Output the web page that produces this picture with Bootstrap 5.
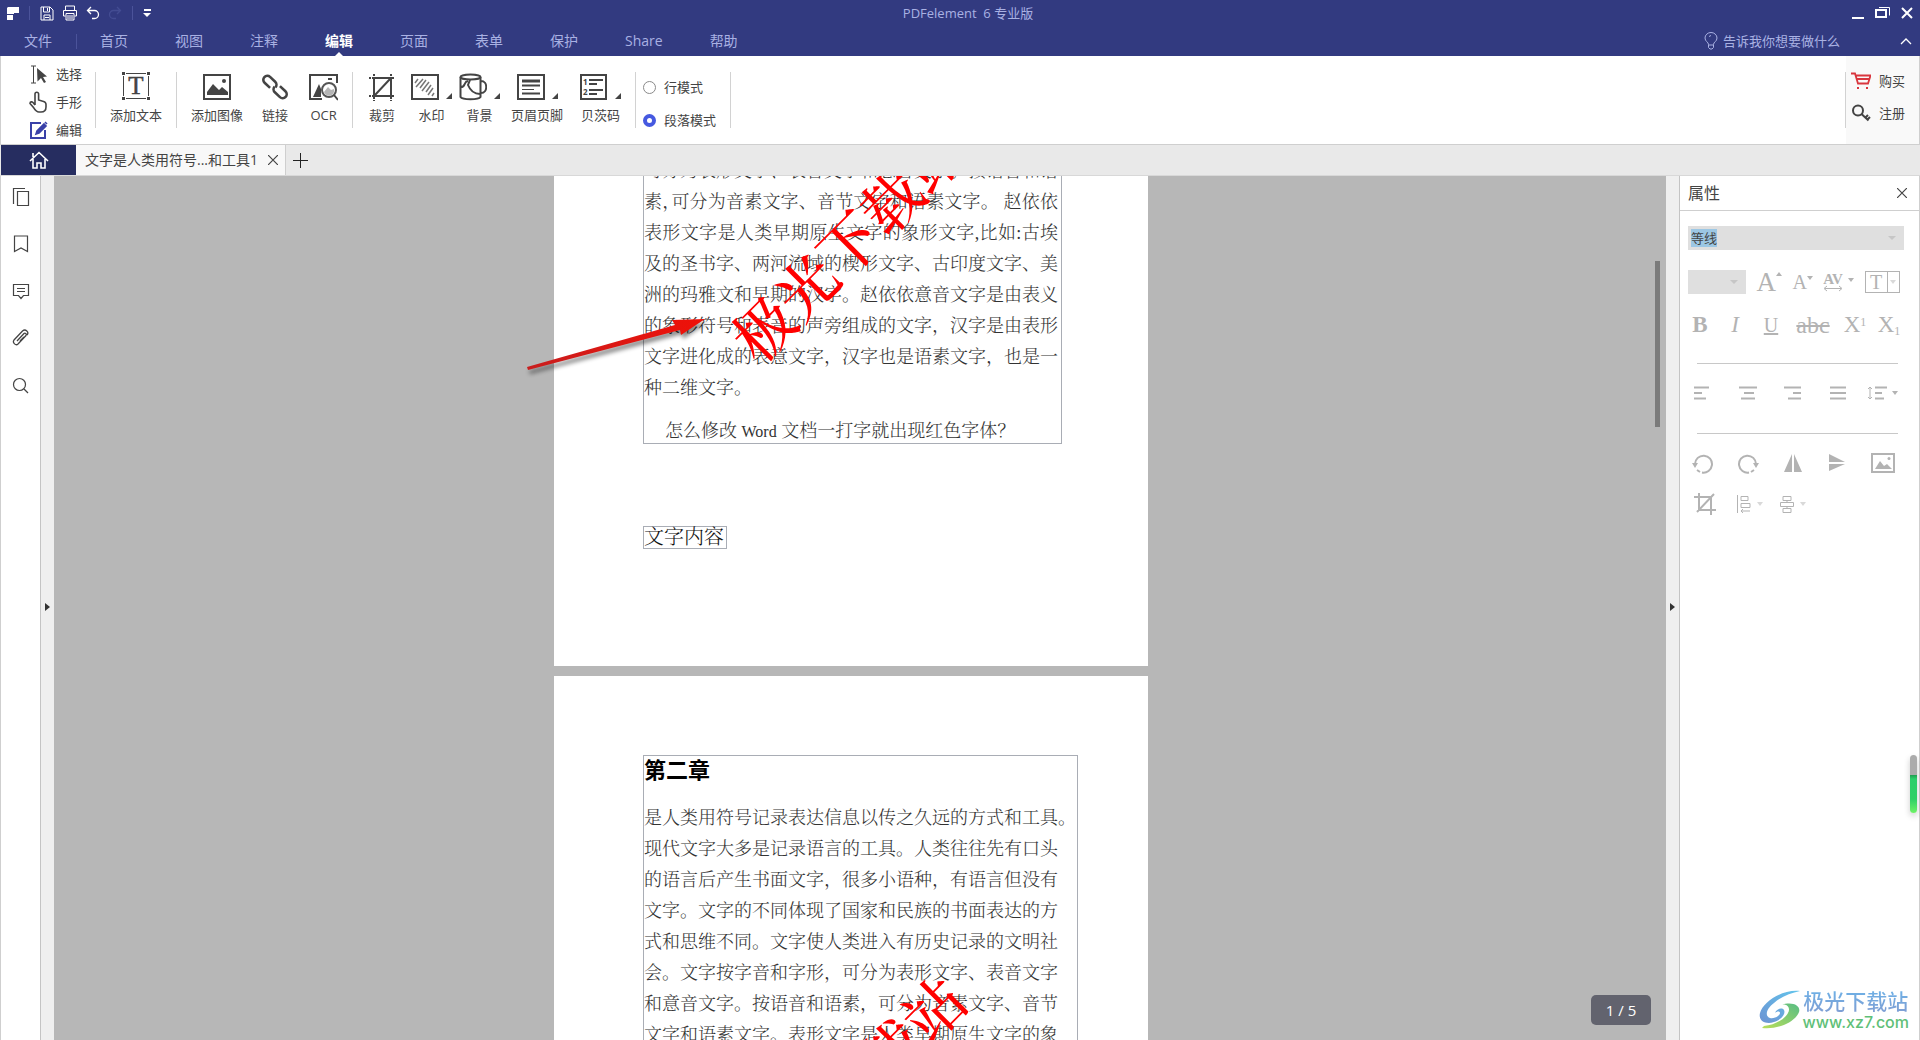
<!DOCTYPE html>
<html lang="zh-CN">
<head>
<meta charset="utf-8">
<meta name="viewport" content="width=device-width, initial-scale=1">
<title>PDFelement 6 专业版</title>
<link href="https://cdn.jsdelivr.net/npm/bootstrap@5.3.0/dist/css/bootstrap.min.css" rel="stylesheet">
<style>
:root{--navy:#323a80;--ink:#444;--dim:#b3b3b3;--line:#cfcfcf}
html,body{height:100%}
body{font-family:"Open Sans","Noto Sans CJK SC",sans-serif;font-size:13px;line-height:20px;color:var(--ink);background:#fff;overflow:hidden}
button{background:none;border:0;padding:0;color:inherit;line-height:inherit;display:inline-flex;align-items:center;justify-content:center}
a{color:inherit;text-decoration:none}
svg{display:block;flex:none}
.ln{fill:none;stroke:currentColor}

/* title bar and menu */
.top-area{background:var(--navy);color:#a9b1e3;flex:none}
.title-row{height:26px;padding-left:7px;padding-right:7px}
.title-side{flex:1 1 0}
.quick{color:#fff}
.vbar{width:1px;background:#4b539a}
.q-sep{height:14px;margin:0 10px}
.app-title{font-size:13px}
.win-tools{color:#fff;gap:10px}
.menu-row{height:30px;padding-left:24px;padding-right:8px;font-size:14px}
.menu-row ul{gap:47px}
.menu-row .file-item{margin-right:-23px}
.menu-row .m-sep{height:15px;margin-right:-24px}
.menu-row a{position:relative;display:block;line-height:30px}
.menu-row a.on{color:#fff;font-weight:bold}
.menu-row a.on::after{content:"";position:absolute;left:50%;bottom:0;margin-left:-4px;border:4px solid transparent;border-top:0;border-bottom-color:#fff}
.ask{font-size:13px;gap:5px}
.menu-end{gap:60px}

/* ribbon */
.ribbon{border-bottom:1px solid var(--line);border-left:1px solid var(--line);height:89px;flex:none}
.modes{padding:4px 13px 0 27px}
.modes button{height:28px;gap:8px;justify-content:start}
.modes svg{width:20px}
.sep{width:1px;background:#d2d2d2;margin-top:16px;margin-bottom:16px}
.group{padding:15px 14px 0 14px}
.tool{flex-direction:column;white-space:nowrap;justify-content:start}
.tool .pic{display:flex;align-items:end;height:30px;margin-bottom:4px;gap:7px}
.tool .pic.more::after{content:"";border:3px solid #444;border-top-color:transparent;border-left-color:transparent;margin-bottom:2px}
.g-s{margin-right:7px}.g-m{margin-right:11px}.g-l{margin-right:17px}.g-x{margin-right:19px}.g-y{margin-right:21px}
.para-modes{padding:21px 14px 0 7px;gap:13px}
.para-modes label{gap:8px}
.para-modes input{appearance:none;width:13px;height:13px;margin:0;border:1px solid #8a8a8a;border-radius:50%;background:#fff}
.para-modes input:checked{border:4px solid #4659e0}
.account{background:#f9f9f9;padding:15px 14px 0 5px;gap:12px;border-right:1px solid var(--line)}
.account button{gap:8px}

/* document tabs */
.tabs{height:31px;background:#e9e9e9;border-bottom:1px solid #d8d8d8;padding-left:1px;flex:none}
.home-tab{width:75px;background:#262d60;color:#fff}
.doc-tab{background:#f8f8f8;border-right:1px solid var(--line);padding:0 7px 0 9px;gap:10px;font-size:14px}
.add-tab{width:28px;color:#222}

/* body */
.rail{width:41px;border-left:1px solid var(--line);border-right:1px solid #c4c4c4;padding-top:11px;gap:27px}
.rail button{height:20px}
.gutter{width:13px;background:#efefef}
.gutter::before{content:"";margin:427px auto 0 4px;height:0;border:4px solid transparent;border-left:5px solid #333;border-right:0}
.canvas{background:#b7b7b7;position:relative;overflow:hidden}
.sheets{margin-top:-350px;margin-right:18px;display:flex;flex-direction:column;align-items:center;gap:10px}
.sheet{width:594px;height:840px;background:#fff;position:relative;overflow:hidden;padding:79px 71px 0 89px;flex:none;font-family:"Liberation Serif","Noto Serif CJK SC","Noto Sans CJK SC",serif;font-size:18px;line-height:31px;font-weight:300;color:#333}
.text-box{border:1px solid #a9adb5}
.text-box p{width:414px;margin:0}
.full{display:block;text-align:justify;text-align-last:justify;white-space:nowrap}
.half{font-feature-settings:"halt"}
.box-a{width:419px;padding-top:250px}
.box-a .indent{line-height:22px;padding:16px 0 0 21px;width:auto}
.latin{font-size:16px}
.box-b{width:84px;margin-top:82px;font-size:20px;line-height:21px;color:#111;white-space:nowrap}
.box-c{width:435px}
.box-c h2{font-family:"Noto Sans CJK SC",sans-serif;font-size:22px;line-height:24px;font-weight:bold;color:#000;margin:0 0 23px}
.stamp{position:absolute;left:50%;top:50%;transform:translate(-50%,-50%) rotate(-45deg);color:#f00;font-size:60px;line-height:60px;font-weight:500;white-space:nowrap}
.pointer{position:absolute;left:465px;top:130px}
.thumb{position:absolute;right:6px;top:85px;width:5px;height:166px;background:#7b7b7b}
.page-no{position:absolute;right:15px;bottom:15px;width:60px;height:30px;border-radius:5px;background:#62636e;color:#fff;font-size:15px}

/* properties */
.props{width:241px;border-left:1px solid #c4c4c4;border-right:1px solid var(--line);color:var(--dim);font-family:"Liberation Serif",serif}
.props header{height:35px;border-bottom:1px solid var(--line);padding:0 12px 0 8px;color:var(--ink);font-family:"Open Sans","Noto Sans CJK SC",sans-serif;font-size:16px}
.sel{appearance:none;border:0;border-radius:0;height:24px;background:#dfdfdf;color:#444;width:100%;padding:0 3px;font-family:"Noto Sans CJK SC",sans-serif}
.sel-wrap{position:relative}
.sel-wrap::after{content:"";position:absolute;right:8px;top:10px;border:4px solid transparent;border-top-color:#c6c6c6;border-bottom:0}
.sel-name{background:linear-gradient(#9cc7e4,#9cc7e4) 3px 3px/26px 18px no-repeat #dfdfdf}
.caret-d{border:3px solid transparent;border-top:4px solid currentColor;border-bottom:0}
.caret-u{border:3px solid transparent;border-bottom:4px solid currentColor;border-top:0}
.face{padding:15px 15px 0 8px}
.sizes{margin-top:20px}
.sizes .sel-wrap{width:58px}
.big-a{font-size:27px}
.small-a{font-size:20px}
.styles{display:grid;grid-template-columns:36px 34px 38px 46px 38px 30px;margin:19px -8px 0 -6px;font-size:23px;height:24px}
.styles .under{font-size:20px}
.styles .strike{font-size:24px}
.styles sup,.styles sub{font-size:12px}
.t-box{border:1px solid var(--dim);height:22px;width:35px;font-size:20px}
.t-box i{border-left:1px solid var(--dim);height:20px;width:12px;display:flex;align-items:center;justify-content:center}
.rule{height:1px;background:#c8c8c8;margin:0 21px 0 17px}
.gap-top{margin-top:26px}
.cells{display:grid;grid-template-columns:repeat(5,45px);padding:17px 0 28px;row-gap:17px}
.cells button{gap:6px;height:24px}
.faint{opacity:.5}
.brand{position:absolute;right:10px;bottom:8px;gap:2px}
.brand-cn{font:500 21px/24px "Noto Sans CJK SC",sans-serif;background:linear-gradient(#6cb2e8,#7f9fd4);background-clip:text;-webkit-background-clip:text;color:transparent}
.brand-url{font:500 16px/20px "Inter","Open Sans",sans-serif;color:#5fbf78}
.meter{position:absolute;right:2px;top:579px;width:7px;height:58px;border-radius:4px;background:linear-gradient(#ababab 20px,#1f9c50 20px,#2bcf6a 24px,#2fd066 44px,#6ff267);box-shadow:0 3px 6px #0003}
</style>
<script src="https://cdn.jsdelivr.net/npm/bootstrap@5.3.0/dist/js/bootstrap.bundle.min.js"></script>
</head>
<body class="d-flex flex-column">

<div class="top-area">
  <div class="title-row d-flex align-items-center">
    <div class="quick title-side d-flex align-items-center">
      <svg width="12" height="13" fill="currentColor"><path d="M1 0h11v6H7v1H0V1zM0 8h6v5H0z"/></svg>
      <span class="vbar q-sep"></span>
      <button aria-label="保存"><svg class="ln" width="14" height="15"><path d="M1 1h9l3 3v10H1zM3.500 1v5h6V1M7.500 2v3M4 14V9h6v5M5 11.500h4"/></svg></button>
      <button class="ms-2" aria-label="打印"><svg class="ln" width="16" height="16"><path d="M3.500 5V1h9v4M3.500 11h-2V5.500h13V11h-2M4 8.500h8v6.500H4zM5 11h6M5 13h6"/></svg></button>
      <button class="ms-2" aria-label="撤消"><svg class="ln" width="14" height="14"><path d="M5 1L1.500 4.500L5 8M2 4.500h6.500a4 4 0 0 1 0 8H6" stroke-width="1.300"/></svg></button>
      <button class="ms-2" aria-label="重做"><svg class="ln" width="14" height="14" color="#434c92"><path d="M9 1l3.500 3.500L9 8M12 4.500H5.500a4 4 0 0 0 0 8H8" stroke-width="1.300"/></svg></button>
      <span class="vbar q-sep"></span>
      <button aria-label="自定义"><svg width="9" height="9" fill="currentColor"><path d="M1 0h7v2H1zM0 4h8L4 8z"/></svg></button>
    </div>
    <div class="app-title ms-3">PDFelement&nbsp; 6 专业版</div>
    <div class="win-tools title-side d-flex align-items-center justify-content-end">
      <button aria-label="最小化"><svg width="13" height="14"><path d="M0 11h12v2H0z" fill="currentColor"/></svg></button>
      <button aria-label="还原"><svg class="ln" width="16" height="14"><path d="M1 4h10v7H1z" stroke-width="2"/><path d="M4 1.500h10.500v8"/></svg></button>
      <button aria-label="关闭"><svg class="ln" width="12" height="12"><path d="M1 1l10 10M11 1L1 11" stroke-width="2"/></svg></button>
    </div>
  </div>
  <nav class="menu-row d-flex align-items-center justify-content-between">
    <ul class="list-unstyled d-flex align-items-center m-0">
      <li class="file-item"><a href="#">文件</a></li>
      <li class="vbar m-sep"></li>
      <li><a href="#">首页</a></li>
      <li><a href="#">视图</a></li>
      <li><a href="#">注释</a></li>
      <li><a href="#" class="on">编辑</a></li>
      <li><a href="#">页面</a></li>
      <li><a href="#">表单</a></li>
      <li><a href="#">保护</a></li>
      <li><a href="#">Share</a></li>
      <li><a href="#">帮助</a></li>
    </ul>
    <div class="menu-end d-flex align-items-center">
      <button class="ask"><svg class="ln" width="14" height="18"><path d="M4.500 12.500C4.500 10 1 9.500 1 6a6 5.500 0 0 1 12 0c0 3.500-3.500 4-3.500 6.500v3l-1.500 1.500H6l-1.500-1.500zM4.500 13h5M5 4.500l2-1"/></svg>告诉我你想要做什么</button>
      <button aria-label="收起"><svg class="ln" width="12" height="8"><path d="M1 7l5-5 5 5" stroke-width="1.300" stroke="#fff"/></svg></button>
    </div>
  </nav>
</div>

<div class="ribbon d-flex">
  <div class="modes d-flex flex-column">
    <button><svg width="20" height="19"><path class="ln" d="M3 1h5M3 18h5M5.500 1v17"/><path d="M9 3l10 8.500-4 .5 3 5-2 1-3-5-3.500 3.500z" fill="#444"/></svg>选择</button>
    <button><svg class="ln" width="20" height="22"><path d="M7 14V3a1.800 1.800 0 0 1 3.600 0v6l5 1.500c1.500.5 2.400 1 2.400 3V16c0 3-2 5-5 5h-2c-3 0-4-2-5.500-4.500L2 12.500c0-2 2-2 3-1L7 14" stroke-width="1.600"/></svg>手形</button>
    <button><svg class="ln" width="20" height="19" color="#3a41a8"><path d="M13 2H3v15h14V9" stroke-width="2"/><path d="M8 13l1-3 7-7 2 2-7 7zM17 1l2 2" stroke-width="1.600" fill="currentColor"/></svg>编辑</button>
  </div>
  <div class="sep"></div>
  <div class="group d-flex align-items-start">
    <button class="tool"><span class="pic"><svg width="30" height="30"><path class="ln" d="M5 2.500h20M5 27.500h20M2.500 5v20M27.500 5v20" stroke="#777"/><path d="M1 1h3v3H1zM26 1h3v3h-3zM1 26h3v3H1zM26 26h3v3h-3z" fill="#444"/><text x="15" y="23" text-anchor="middle" font-family="Liberation Serif" font-size="25" stroke="#444" stroke-width=".5" fill="#444">T</text></svg></span>添加文本</button>
  </div>
  <div class="sep"></div>
  <div class="group d-flex align-items-start">
    <button class="tool g-x"><span class="pic"><svg width="28" height="28"><path class="ln" d="M1 2h26v24H1z" stroke-width="2"/><path d="M4 22v-3l6-8 6 6 3-3 6 5v3z" fill="#444"/><circle cx="21" cy="8" r="2" fill="#444"/></svg></span>添加图像</button>
    <button class="tool g-y"><span class="pic"><svg class="ln" width="26" height="28"><g transform="rotate(43 13 14)" stroke-width="2.600"><path d="M10 18H2.500a4 4 0 0 1 0-8h7a4 4 0 0 1 4 4"/><path d="M16 10h7.500a4 4 0 0 1 0 8h-7a4 4 0 0 1-4-4"/></g></svg></span>链接</button>
    <button class="tool"><span class="pic"><svg width="29" height="28"><path class="ln" d="M13 26H1V2h27v8" stroke-width="2"/><path d="M4 24l6-13 2 5v8z" fill="#444"/><circle cx="20" cy="17" r="7" fill="#fff" stroke="#555" stroke-width="2"/><path d="M15 19l4-5 3 3 3-1a5 5 0 0 1-10 3z" fill="#b5b5b5"/><path class="ln" d="M25 22l4 5M19 6h4" stroke-width="2"/></svg></span>OCR</button>
  </div>
  <div class="sep"></div>
  <div class="group d-flex align-items-start ps-3">
    <button class="tool me-3"><span class="pic"><svg class="ln" width="26" height="28"><path d="M5 5h17v18H5zM6 22L21 6" stroke-width="2"/><path d="M5 1v3M22 1v3M5 24v4M22 24v4M0 5h4M0 23h4M23 5h3M23 23h3" stroke-width="2" stroke-dasharray="2 1"/></svg></span>裁剪</button>
    <button class="tool g-s"><span class="pic more"><svg class="ln" width="28" height="28"><path d="M1 2h26v24H1z" stroke-width="2"/><path d="M4 10l3-4M5 14l7-8M9 15l6-8M11 18l7-9M15 19l5-7M17 22l5-7M21 23l2-3" stroke="#777" stroke-width="1.500"/></svg></span>水印</button>
    <button class="tool g-m"><span class="pic more"><svg class="ln" width="28" height="28"><ellipse cx="11.500" cy="4" rx="10" ry="2.500" stroke-width="2"/><path d="M1.500 4v20c2 3 18 3 20 0V4M22 8c7 0 7 12 0 12M21 21c-7 0-10-4-12-9l2-5M2 14c5 0 2-5 7-6" stroke-width="2"/></svg></span>背景</button>
    <button class="tool g-l"><span class="pic more"><svg class="ln" width="28" height="28"><path d="M1 2h26v24H1z" stroke-width="2"/><path d="M5 8h18" stroke-width="3"/><path d="M5 12.500h18M5 20.500h18" stroke-width="2"/><path d="M5 16.500h12" stroke-width="1"/></svg></span>页眉页脚</button>
    <button class="tool"><span class="pic more"><svg width="28" height="28"><path class="ln" d="M1 2h25v24H1z" stroke-width="2"/><path class="ln" d="M9 7h14M9 17h14M9 11h8M9 21h8" stroke-width="2"/><text x="3" y="12" font-size="8" font-weight="bold" fill="#444">1</text><text x="3" y="22" font-size="8" font-weight="bold" fill="#444">2</text></svg></span>贝茨码</button>
  </div>
  <div class="sep"></div>
  <div class="para-modes d-flex flex-column">
    <label class="d-flex align-items-center" for="m1"><input type="radio" name="pm" id="m1">行模式</label>
    <label class="d-flex align-items-center" for="m2"><input type="radio" name="pm" id="m2" checked>段落模式</label>
  </div>
  <div class="sep"></div>
  <div class="sep ms-auto"></div>
  <div class="account d-flex flex-column">
    <button><svg class="ln" width="20" height="18" color="#d9363e"><path d="M0 1.500h4l3 10h10l2.500-8H5M6 7h12" stroke-width="1.800"/><path d="M6 15h2v2H6zM15 15h2v2h-2z" fill="currentColor" stroke="none"/></svg>购买</button>
    <button><svg class="ln" width="20" height="18"><circle cx="7" cy="6.500" r="5" stroke-width="2"/><path d="M10.500 10l7 6.500M14 14l3-3M16 16l3-3" stroke-width="2"/></svg>注册</button>
  </div>
</div>

<div class="tabs d-flex">
  <button class="home-tab" aria-label="主页"><svg class="ln" width="20" height="20"><path d="M1 11L10 2.500 19 11M4 9v9h4v-5h4v5h4V9M4 7V3" stroke-width="1.600"/></svg></button>
  <div class="doc-tab d-flex align-items-center"><a href="#">文字是人类用符号...和工具1</a><button aria-label="关闭标签"><svg class="ln" width="10" height="10"><path d="M0 0l10 10M10 0L0 10" stroke-width="1.200"/></svg></button></div>
  <button class="add-tab" aria-label="新标签"><svg class="ln" width="15" height="15"><path d="M7.500 0v15M0 7.500h15"/></svg></button>
</div>

<div class="d-flex flex-grow-1 overflow-hidden position-relative">
  <div class="rail d-flex flex-column flex-shrink-0">
    <button aria-label="缩略图"><svg class="ln" width="18" height="20"><path d="M5.500 4.500h11v14h-11zM13 1.500H1.500V17" stroke-width="1.200"/></svg></button>
    <button aria-label="书签"><svg class="ln" width="16" height="18"><path d="M1.500 1h13v15.500L8 13l-6.500 3.500z" stroke-width="1.200"/></svg></button>
    <button aria-label="注释"><svg class="ln" width="18" height="17"><path d="M1.500 1.500h15v11h-5L9 15.500l-2.500-3h-5zM5 5.500h8M5 8.500h8" stroke-width="1.200"/></svg></button>
    <button aria-label="附件"><svg class="ln" width="18" height="19"><path d="M5 12l7-7.500c1-1 3 .5 2 2L6 15c-2 2-6-1-4-4l8.500-9c3-2.500 7 1 4.500 4M8 12l4-4" stroke-width="1.300"/></svg></button>
    <button aria-label="搜索"><svg class="ln" width="17" height="17"><circle cx="7.500" cy="7.500" r="6" stroke-width="1.200"/><path d="M12 12l4 4" stroke-width="1.200"/></svg></button>
  </div>
  <div class="gutter d-flex flex-column flex-shrink-0"></div>

  <main class="canvas flex-grow-1">
    <div class="sheets">
      <article class="sheet">
        <div class="text-box box-a">
          <p><span class="full">可分为表形文字、表音文字和意音文字。按语音和语</span>
          <span class="full">素<span class="half">，</span>可分为音素文字、音节文字和语素文字。 赵依依</span>
          <span class="full">表形文字是人类早期原生文字的象形文字,比如:古埃</span>
          <span class="full">及的圣书字、两河流域的楔形文字、古印度文字、美</span>
          <span class="full">洲的玛雅文和早期的汉字。赵依依意音文字是由表义</span>
          <span class="full">的象形符号和表音的声旁组成的文字，汉字是由表形</span>
          <span class="full">文字进化成的表意文字，汉字也是语素文字，也是一</span>
          <span class="d-block">种二维文字。</span></p>
          <p class="indent">怎么修改 <span class="latin">Word</span> 文档一打字就出现红色字体？</p>
        </div>
        <div class="text-box box-b">文字内容</div>
        <div class="stamp">极光下载站</div>
      </article>
      <article class="sheet">
        <div class="text-box box-c">
          <h2>第二章</h2>
          <span class="d-block text-nowrap">是人类用符号记录表达信息以传之久远的方式和工具。</span>
          <p><span class="full">现代文字大多是记录语言的工具。人类往往先有口头</span>
          <span class="full">的语言后产生书面文字，很多小语种，有语言但没有</span>
          <span class="full">文字。文字的不同体现了国家和民族的书面表达的方</span>
          <span class="full">式和思维不同。文字使人类进入有历史记录的文明社</span>
          <span class="full">会。文字按字音和字形，可分为表形文字、表音文字</span>
          <span class="full">和意音文字。按语音和语素，可分为音素文字、音节</span>
          <span class="full">文字和语素文字。表形文字是人类早期原生文字的象</span></p>
        </div>
        <div class="stamp">极光下载站</div>
      </article>
    </div>
    <svg class="pointer" width="200" height="75">
      <defs><linearGradient id="ar" x1="0" x2="1"><stop offset="0" stop-color="#c81e1e"/><stop offset="1" stop-color="#f01008"/></linearGradient></defs>
      <g filter="drop-shadow(2px 4px 2px #0007)"><path d="M8 61L156 19l-3-5 33-1-24 16-1-5L9 64z" fill="url(#ar)"/></g>
    </svg>
    <div class="thumb"></div>
    <div class="page-no d-flex align-items-center justify-content-center">1 / 5</div>
  </main>

  <div class="gutter d-flex flex-column flex-shrink-0"></div>
  <aside class="props flex-shrink-0 position-relative">
    <header class="d-flex align-items-center justify-content-between"><span>属性</span><button aria-label="关闭属性"><svg class="ln" width="10" height="10"><path d="M0 0l10 10M10 0L0 10" stroke-width="1.200"/></svg></button></header>
    <div class="face">
      <div class="sel-wrap"><select class="sel sel-name" aria-label="字体"><option>等线</option></select></div>
      <div class="sizes d-flex align-items-center justify-content-between">
        <div class="sel-wrap"><select class="sel" aria-label="字号"><option></option></select></div>
        <button class="big-a align-items-start">A<i class="caret-u"></i></button>
        <button class="small-a align-items-start">A<i class="caret-d mt-1"></i></button>
        <button class="gap-1"><svg width="21" height="20"><text x="10" y="12" text-anchor="middle" font-size="15" font-weight="bold" fill="#b3b3b3">AV</text><path class="ln" d="M2 16.500h16M4 14l-3 2.500L4 19M16 14l3 2.500-3 2.500"/></svg><i class="caret-d mb-1"></i></button>
        <button class="t-box justify-content-between ps-1 me-1">T<i><b class="caret-d faint"></b></i></button>
      </div>
      <div class="styles">
        <button><b>B</b></button><button><i>I</i></button><button class="under"><u>U</u></button><button class="strike"><s>abc</s></button>
        <button><span>X<sup>1</sup></span></button><button><span>X<sub>1</sub></span></button>
      </div>
    </div>
    <div class="rule gap-top"></div>
    <div class="cells">
      <button aria-label="左对齐"><svg class="ln" width="18" height="14"><path d="M0 1.500h15M0 7h8M0 12.500h12" stroke-width="2"/></svg></button>
      <button aria-label="居中"><svg class="ln" width="18" height="14"><path d="M0 1.500h18M5 7h10M2 12.500h14" stroke-width="2"/></svg></button>
      <button aria-label="右对齐"><svg class="ln" width="18" height="14"><path d="M0 1.500h17M9 7h8M4 12.500h13" stroke-width="2"/></svg></button>
      <button aria-label="两端对齐"><svg class="ln" width="16" height="14"><path d="M0 1.500h16M0 7h16M0 12.500h16" stroke-width="2"/></svg></button>
      <button aria-label="行距" class="gap-1"><svg class="ln" width="21" height="14"><path d="M3 1v12M1 3l2-2 2 2M1 11l2 2 2-2"/><path d="M8 1.500h12M8 7h7M8 12.500h9" stroke-width="2"/></svg><i class="caret-d"></i></button>
    </div>
    <div class="rule"></div>
    <div class="cells">
      <button aria-label="左旋"><svg class="ln" width="22" height="21"><path d="M3 11a8.500 8.500 0 1 1 7 8.500M8 19l-3-2" stroke-width="2"/><path d="M0 10h6l-3 5z" fill="currentColor" stroke="none"/></svg></button>
      <button aria-label="右旋"><svg class="ln" width="22" height="21"><path d="M19 11a8.500 8.500 0 1 0-7 8.500M14 19l3-2" stroke-width="2"/><path d="M16 10h6l-3 5z" fill="currentColor" stroke="none"/></svg></button>
      <button aria-label="水平翻转"><svg width="18" height="19" fill="currentColor"><path d="M8 0v18H0zM10 0v18h8z"/></svg></button>
      <button aria-label="垂直翻转"><svg width="17" height="18" fill="currentColor"><path d="M0 0v8h16zM0 17v-7h16z"/></svg></button>
      <button aria-label="替换图像"><svg width="24" height="20"><path class="ln" d="M1 1h22v18H1z" stroke-width="2"/><path d="M4 16l5-8 4 5 3-2 5 5z" fill="currentColor"/><circle cx="18" cy="5.500" r="1.500" fill="currentColor"/></svg></button>
      <button aria-label="裁剪图像"><svg class="ln ms-1" width="22" height="22"><path d="M5 0v17h17M0 4h17v18M3 19L20 1" stroke-width="2"/></svg></button>
      <button aria-label="对齐"><svg class="ln ms-1" width="14" height="19"><path d="M.5 0v18M4 1.500h7v4H4zM4 8.500h9v4H4zM4 16h9M6 14l-2 2 2 2"/></svg><i class="caret-d faint"></i></button>
      <button aria-label="分布"><svg class="ln" width="14" height="19"><path d="M3 1.500h8v4H3zM.5 7.500h13v4H.5zM3 13.500h8v4H3zM7 5.500v2M7 11.500v2"/></svg><i class="caret-d faint"></i></button>
    </div>
    <div class="meter"></div>
    <div class="brand d-flex align-items-center">
      <svg width="42" height="40"><defs><linearGradient id="b1" x1="0" y1="1" x2="1" y2="0"><stop offset="0" stop-color="#6d93d3"/><stop offset="1" stop-color="#63c5ec"/></linearGradient><linearGradient id="b2" x1="0" y1="1" x2="1" y2="0"><stop offset="0" stop-color="#b9de5a"/><stop offset="1" stop-color="#58bd84"/></linearGradient></defs>
      <path d="M41 1C23-1 4 12 1 23c-2 8 6 12 14 9 7-2 12-8 10-12-2-3-8-1-9 3 2-2 5-2 5 0 0 3-6 6-10 5-6-2-3-10 4-15C23 6 32 3 41 1z" fill="url(#b1)"/><path d="M22 15c6-2 10 3 7 8-3 6-13 12-24 13l-2 2c17 2 34-7 37-16 2-6-6-11-18-7z" fill="url(#b2)"/></svg>
      <div class="text-center"><div class="brand-cn">极光下载站</div><div class="brand-url">www.xz7.com</div></div>
    </div>
  </aside>
</div>
</body>
</html>
